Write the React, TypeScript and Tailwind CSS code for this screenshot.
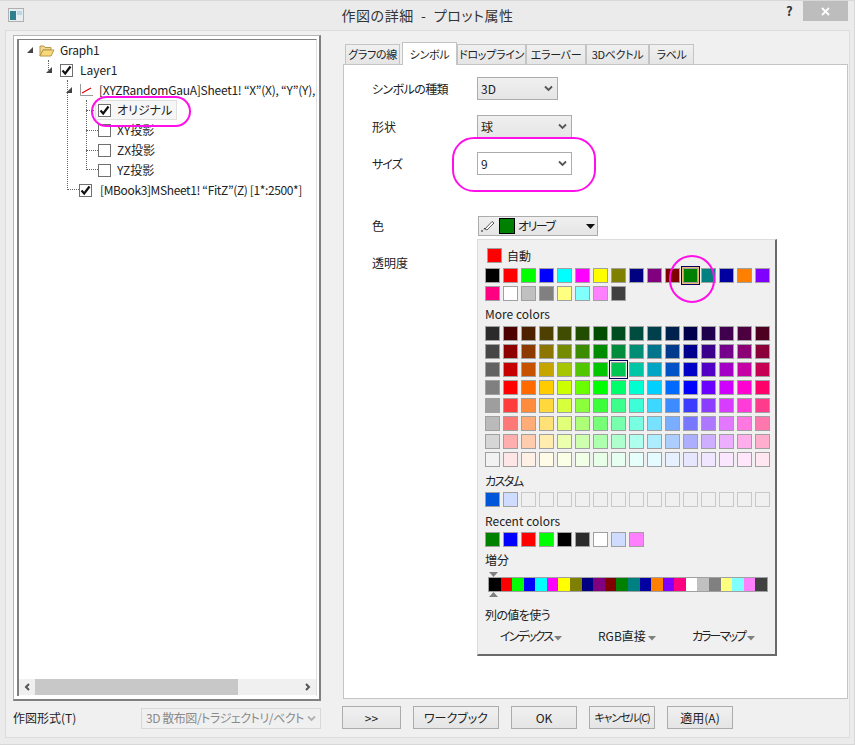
import React from "react";

const base = ["000000","ff0000","00ff00","0000ff","00ffff","ff00ff","ffff00","808000","000080","800080","800000","008000","008080","0000a0","ff8000","8000ff"];
const base2 = ["ff0080","ffffff","c0c0c0","808080","ffff80","80ffff","ff80ff","404040"];
const more = [
  ["2b2b2b","4d0000","4d2000","4d4000","404d00","204d00","004d00","004d20","004d40","00404d","00204d","00004d","20004d","40004d","4d0040","4d0020"],
  ["464646","8c0000","8c3a00","8c7500","758c00","3a8c00","008c00","008c3a","008c75","00758c","003a8c","00008c","3a008c","75008c","8c0075","8c003a"],
  ["626262","c60000","c65200","c6a500","a5c600","52c600","00c600","00c652","00c6a5","00a5c6","0052c6","0000c6","5200c6","a500c6","c600a5","c60052"],
  ["808080","ff0000","ff6a00","ffcc00","ccff00","6aff00","00ff00","00ff6a","00ffd0","00d0ff","006aff","0000ff","6a00ff","d000ff","ff00d0","ff006a"],
  ["9e9e9e","ff3c3c","ff8c3c","ffd83c","d8ff3c","8cff3c","3cff3c","3cff8c","3cffd8","3cd8ff","3c8cff","3c3cff","8c3cff","d83cff","ff3cd8","ff3c8c"],
  ["bababa","ff7878","ffad78","ffe178","e1ff78","adff78","78ff78","78ffad","78ffe1","78e1ff","78adff","7878ff","ad78ff","e178ff","ff78e1","ff78ad"],
  ["d6d6d6","ffaeae","ffcdae","ffecae","ecffae","cdffae","aeffae","aeffcd","aeffec","aeecff","aecdff","aeaeff","cdaeff","ecaeff","ffaeec","ffaecd"],
  ["f2f2f2","ffe6e6","fff0e6","fffbe6","fbffe6","f0ffe6","e6ffe6","e6fff0","e6fffb","e6fbff","e6f0ff","e6e6ff","f0e6ff","fbe6ff","ffe6fb","ffe6f0"],
];
const recent = ["008000","0000ff","ff0000","00ff00","000000","2b2b2b","ffffff","d0dcff","ff80ff"];
const bar = [...base, ...base2];

function Swatch({ c, sel, warm }: { c?: string; sel?: boolean; warm?: boolean }) {
  const style = c ? { backgroundColor: "#" + c } : undefined;
  return (
    <div className="relative w-[15px] h-[15px]">
      {sel && <div className={"absolute -left-[2px] -top-[2px] w-[19px] h-[19px] border border-[#000060] " + (warm ? "bg-[#f0b878]" : "bg-[#f0f0f0]")} />}
      <div className={"relative w-[15px] h-[15px] border " + (c ? "border-[#a0a0a0]" : "border-[#c8c8c8]")} style={style} />
    </div>
  );
}

function Check({ on }: { on?: boolean }) {
  return (
    <div className="w-[13px] h-[13px] border border-[#707070] bg-white flex items-center justify-center shrink-0">
      {on && (
        <svg width="11" height="11" viewBox="0 0 11 11">
          <path d="M1.5 5.5 L4.2 8.5 L9.5 1.5" fill="none" stroke="#111" strokeWidth="2.2" />
        </svg>
      )}
    </div>
  );
}

function Expander() {
  return (
    <svg width="6" height="6" viewBox="0 0 6 6" className="shrink-0">
      <path d="M6 0 V6 H0 Z" fill="#444" />
    </svg>
  );
}

function Chevron({ color = "#555" }: { color?: string }) {
  return (
    <svg width="9" height="7" viewBox="0 0 9 7" className="shrink-0">
      <path d="M1 1.5 L4.5 5 L8 1.5" fill="none" stroke={color} strokeWidth="1.8" />
    </svg>
  );
}

function Row({ pl, children }: { pl: string; children: React.ReactNode }) {
  return <div className={"h-5 flex items-center whitespace-nowrap relative " + pl}>{children}</div>;
}

function Btn({ w, children }: { w: string; children: React.ReactNode }) {
  return (
    <div className={"h-[23px] border border-[#acacac] bg-gradient-to-b from-[#f0f0f0] to-[#e5e5e5] flex items-center justify-center whitespace-nowrap text-[12px] text-[#222] " + w}>
      {children}
    </div>
  );
}

function Tab({ w, active, children }: { w: string; active?: boolean; children: React.ReactNode }) {
  return active ? (
    <div className={"h-[23px] bg-white border border-b-0 border-[#c4c4c4] flex items-center justify-center whitespace-nowrap text-[11px] tracking-[-0.3px] text-[#222] relative -mb-px z-10 " + w}>{children}</div>
  ) : (
    <div className={"h-[20px] bg-gradient-to-b from-[#f0f0f0] to-[#e5e5e5] border border-b-0 border-[#c4c4c4] flex items-center justify-center whitespace-nowrap text-[11px] tracking-[-0.3px] text-[#222] " + w}>{children}</div>
  );
}

function Sel({ w, white, children }: { w: string; white?: boolean; children: React.ReactNode }) {
  return (
    <div className={"h-[23px] border border-[#acacac] flex items-center justify-between pl-[3px] pr-[4px] text-[12px] text-[#222] " + (white ? "bg-white " : "bg-gradient-to-b from-[#f0f0f0] to-[#e5e5e5] ") + w}>
      <span>{children}</span>
      <Chevron />
    </div>
  );
}

function MenuArrow() {
  return (
    <svg width="8" height="5" viewBox="0 0 8 5" className="ml-[2px] mt-[4px] shrink-0">
      <path d="M0 0 H8 L4 4.5 Z" fill="#808080" />
    </svg>
  );
}

function Popup() {
  return (
    <div className="absolute left-[133px] top-[174px] w-[300px] h-[417px] bg-[#f0f0f0] border-l border-t border-[#dcdcdc] border-r-2 border-b-2 border-r-[#6a6a6a] border-b-[#6a6a6a] pl-[7px] pt-[8px] z-20 text-[12px] text-[#222]">
      <div className="flex items-center h-[15px] pl-[2px] gap-[5px]">
        <Swatch c="ff0000" />
        <span>自動</span>
      </div>
      <div className="grid grid-cols-[repeat(16,15px)] gap-[3px] mt-[5px]">
        {base.map((c, i) => <Swatch key={i} c={c} sel={i === 11} warm />)}
        {base2.map((c, i) => <Swatch key={"b" + i} c={c} />)}
      </div>
      <div className="h-[18px] mt-[4px] leading-[18px]">More colors</div>
      <div className="grid grid-cols-[repeat(16,15px)] gap-[3px] mt-[3px]">
        {more.flatMap((r, ri) => r.map((c, i) => <Swatch key={ri + "-" + i} c={c} sel={ri === 2 && i === 7} />))}
      </div>
      <div className="h-[18px] mt-[5px] leading-[18px] tracking-[-1.5px]">カスタム</div>
      <div className="grid grid-cols-[repeat(16,15px)] gap-[3px] mt-[2px]">
        <Swatch c="0055d8" />
        <Swatch c="d0dcff" />
        {Array.from({ length: 14 }).map((_, i) => <Swatch key={i} />)}
      </div>
      <div className="h-[18px] mt-[5px] leading-[18px]">Recent colors</div>
      <div className="flex gap-[3px] mt-[2px]">
        {recent.map((c, i) => <Swatch key={i} c={c} />)}
      </div>
      <div className="h-[18px] mt-[4px] leading-[18px]">増分</div>
      <div className="mt-[3px] ml-[3px]">
        <svg width="10" height="5" viewBox="0 0 10 5" className="block ml-[1px]"><path d="M0 0 H9 L4.5 5 Z" fill="#808080" /></svg>
        <div className="flex w-[280px] h-[15px] border border-[#a0a0a0]">
          {bar.map((c, i) => <div key={i} className="flex-1" style={{ backgroundColor: "#" + c }} />)}
        </div>
        <svg width="10" height="5" viewBox="0 0 10 5" className="block ml-[1px]"><path d="M0 5 H9 L4.5 0 Z" fill="#808080" /></svg>
      </div>
      <div className="h-[18px] mt-[9px] leading-[18px] tracking-[-0.6px]">列の値を使う</div>
      <div className="grid grid-cols-[98px_94px_auto] pl-[15px] mt-[3px] h-[18px] items-center whitespace-nowrap">
        <div className="flex items-center"><span className="tracking-[-1.8px]">インデックス</span><MenuArrow /></div>
        <div className="flex items-center">RGB直接<MenuArrow /></div>
        <div className="flex items-center"><span className="tracking-[-1.9px]">カラーマップ</span><MenuArrow /></div>
      </div>
    </div>
  );
}

export default function App() {
  return (
    <div
      className="relative w-[855px] h-[745px] bg-[#ebebeb] overflow-hidden border-t border-b border-r border-[#d8d8d8] text-[#222] [font-feature-settings:'palt']"
      style={{ fontFamily: '"Noto Sans CJK JP", "Noto Sans", sans-serif' }}
    >
      {/* title bar */}
      <div className="relative h-[29px] flex items-center justify-center text-[14px] text-[#333]">
        <svg width="16" height="14" viewBox="0 0 16 14" className="absolute left-[8px] top-[7px]">
          <rect x="0.5" y="0.5" width="15" height="13" fill="#e8eef0" stroke="#b0b0b0" />
          <rect x="2" y="3" width="6" height="9" fill="#2f7f8f" />
          <rect x="9" y="3" width="5" height="4" fill="#b8d8e8" />
        </svg>
        <span className="pl-[1px] tracking-[0.55px] whitespace-pre">作図の詳細  -  プロット属性</span>
        <span className="absolute left-[786px] top-0 text-[13px] font-bold text-[#333]">?</span>
        <div className="absolute left-[803px] top-0 w-[45px] h-[20px] bg-[#bdbdbd] flex items-center justify-center">
          <svg width="9" height="9" viewBox="0 0 9 9"><path d="M1 1 L8 8 M8 1 L1 8" stroke="#fff" strokeWidth="1.8" /></svg>
        </div>
      </div>

      {/* main client area */}
      <div className="ml-[5px] w-[845px] h-[708px] bg-[#f0f0f0] border border-[#dcdcdc] flex pl-[7px] pt-[4px]">
        {/* left column */}
        <div className="w-[308px] flex flex-col">
          <div className="h-[666px] border-l border-t border-[#b4b4b4] border-r-2 border-b-2 border-r-[#808080] border-b-[#808080] bg-white p-[3px] pr-[2px]">
            <div className="relative h-full border-l-2 border-t border-[#808080] border-r border-r-[#e0e0e0] flex flex-col">
              <div className="relative flex-1 overflow-hidden text-[12px] text-[#222]">
                {/* tree guides */}
                <div className="absolute left-[48px] top-[40px] h-[110px] border-l border-dotted border-[#666]" />
                <div className="absolute left-[48px] top-[149px] w-[12px] border-t border-dotted border-[#666]" />
                <div className="absolute left-[29px] top-[20px] h-[10px] border-l border-dotted border-[#666]" />
                <div className="absolute left-[67px] top-[60px] h-[70px] border-l border-dotted border-[#666]" />
                <div className="absolute left-[67px] top-[70px] w-[12px] border-t border-dotted border-[#666]" />
                <div className="absolute left-[67px] top-[90px] w-[12px] border-t border-dotted border-[#666]" />
                <div className="absolute left-[67px] top-[110px] w-[12px] border-t border-dotted border-[#666]" />
                <div className="absolute left-[67px] top-[129px] w-[12px] border-t border-dotted border-[#666]" />

                <Row pl="pl-[8px]">
                  <Expander />
                  <svg width="16" height="13" viewBox="0 0 16 13" className="ml-[6px] shrink-0">
                    <path d="M1 2 H5 L6 3.5 H12 V6 H4 L1 12 Z" fill="#f0d890" stroke="#b89848" />
                    <path d="M4 6 H15 L12 12 H1 Z" fill="#f8d878" stroke="#b89848" />
                  </svg>
                  <span className="ml-[5px] tracking-[-0.2px]">Graph1</span>
                </Row>
                <Row pl="pl-[27px]">
                  <Expander />
                  <span className="w-[8px]" />
                  <Check on />
                  <span className="ml-[7px]">Layer1</span>
                </Row>
                <Row pl="pl-[47px]">
                  <Expander />
                  <svg width="13" height="12" viewBox="0 0 13 12" className="ml-[8px] shrink-0">
                    <path d="M0.5 0 V11.5 H13" fill="none" stroke="#999" />
                    <path d="M2 9 L11 4" fill="none" stroke="#e00000" strokeWidth="1.2" />
                  </svg>
                  <span className="ml-[6px] tracking-[-0.25px]">[XYZRandomGauA]Sheet1! “X”(X), “Y”(Y),</span>
                </Row>
                <Row pl="pl-[76px]">
                  <div className="flex items-center h-5 pl-[2px] w-[82px] bg-[#f6f6f6] border border-[#e0e0e0]">
                    <Check on />
                    <span className="ml-[6px]">オリジナル</span>
                  </div>
                </Row>
                <Row pl="pl-[79px]"><Check /><span className="ml-[6px]">XY投影</span></Row>
                <Row pl="pl-[79px]"><Check /><span className="ml-[6px]">ZX投影</span></Row>
                <Row pl="pl-[79px]"><Check /><span className="ml-[6px]">YZ投影</span></Row>
                <Row pl="pl-[60px]"><Check on /><span className="ml-[8px] tracking-[-0.37px]">[MBook3]MSheet1! “FitZ”(Z) [1*:2500*]</span></Row>
              </div>
              {/* scrollbar */}
              <div className="h-[16px] bg-[#f0f0f0] flex items-center justify-between relative mb-[1px]">
                <svg width="17" height="16" viewBox="0 0 17 16"><path d="M10 5 L7 8 L10 11" fill="none" stroke="#555" strokeWidth="2" /></svg>
                <div className="absolute left-[16px] top-0 w-[203px] h-[16px] bg-[#c8c8c8]" />
                <svg width="17" height="16" viewBox="0 0 17 16"><path d="M7 5 L10 8 L7 11" fill="none" stroke="#555" strokeWidth="2" /></svg>
              </div>
            </div>
          </div>
          <div className="flex items-center justify-between h-[20px] mt-[7px] text-[12px] text-[#222]">
            <span>作図形式(T)</span>
            <div className="w-[180px] h-[21px] border border-[#d8d8d8] flex items-center justify-between pl-[4px] pr-[4px] text-[#8a8a8a]">
              <span className="whitespace-nowrap tracking-[-0.45px]">3D 散布図/トラジェクトリ/ベクト</span>
              <Chevron color="#b0b0b0" />
            </div>
          </div>
        </div>

        {/* right column */}
        <div className="w-[506px] ml-[22px] flex flex-col pt-[7px]">
          <div className="flex items-end pl-[2px] relative">
            <Tab w="w-[55px] mr-[2px]">グラフの線</Tab>
            <Tab w="w-[55px]" active>シンボル</Tab>
            <Tab w="w-[69px]">ドロップライン</Tab>
            <Tab w="w-[60px]">エラーバー</Tab>
            <Tab w="w-[63px]">3Dベクトル</Tab>
            <Tab w="w-[45px]">ラベル</Tab>
          </div>
          <div className="relative h-[635px] w-[505px] bg-white border border-[#c4c4c4] pt-[12px] pl-[28px] text-[12px] text-[#222]">
            <div className="flex items-center">
              <span className="w-[105px] tracking-[-0.6px]">シンボルの種類</span>
              <Sel w="w-[81px]">3D</Sel>
            </div>
            <div className="flex items-center mt-[15px]">
              <span className="w-[105px]">形状</span>
              <Sel w="w-[95px]">球</Sel>
            </div>
            <div className="flex items-center mt-[14px]">
              <span className="w-[105px] tracking-[-1px]">サイズ</span>
              <Sel w="w-[95px]" white>9</Sel>
            </div>
            <div className="flex items-center mt-[41px] h-[20px]">
              <span className="w-[106px]">色</span>
              <div className="w-[120px] h-[20px] border border-[#acacac] bg-gradient-to-b from-[#f0f0f0] to-[#e5e5e5] flex items-center pl-[1px] whitespace-nowrap">
                <svg width="16" height="14" viewBox="0 0 16 14" className="shrink-0">
                  <path d="M5 10 L12 2.5 L14 4 L7 11 Z" fill="#fff" stroke="#333" strokeWidth="0.8" />
                  <path d="M1 12 H3 M4 10.5 L5 9" stroke="#222" strokeWidth="1" />
                </svg>
                <div className="w-[16px] h-[16px] bg-[#008000] border border-black ml-[3px] shrink-0" />
                <span className="ml-[3px] w-[68px] tracking-[-1.5px]">オリーブ</span>
                <svg width="9" height="5" viewBox="0 0 9 5" className="shrink-0"><path d="M0 0 H9 L4.5 5 Z" fill="#111" /></svg>
              </div>
            </div>
            <div className="h-[20px] mt-[17px] leading-[20px]">透明度</div>
            <Popup />
          </div>
          <div className="flex gap-[12px] mt-[7px] -ml-[1px]">
            <Btn w="w-[59px]">&gt;&gt;</Btn>
            <Btn w="w-[86px]">ワークブック</Btn>
            <Btn w="w-[66px]">OK</Btn>
            <Btn w="w-[66px]"><span className="text-[11px] tracking-[-1.1px]">キャンセル(C)</span></Btn>
            <Btn w="w-[66px]">適用(A)</Btn>
          </div>
        </div>
      </div>

      {/* magenta annotations */}
      <div className="absolute left-[91px] top-[95px] w-[100px] h-[31px] rounded-full border-2 border-[#ff10e8] z-30" />
      <div className="absolute left-[452px] top-[136px] w-[144px] h-[55px] rounded-[22px] border-2 border-[#ff10e8] z-30" />
      <div className="absolute left-[669px] top-[254px] w-[46px] h-[48px] rounded-full border-2 border-[#ff10e8] z-30" />
    </div>
  );
}
